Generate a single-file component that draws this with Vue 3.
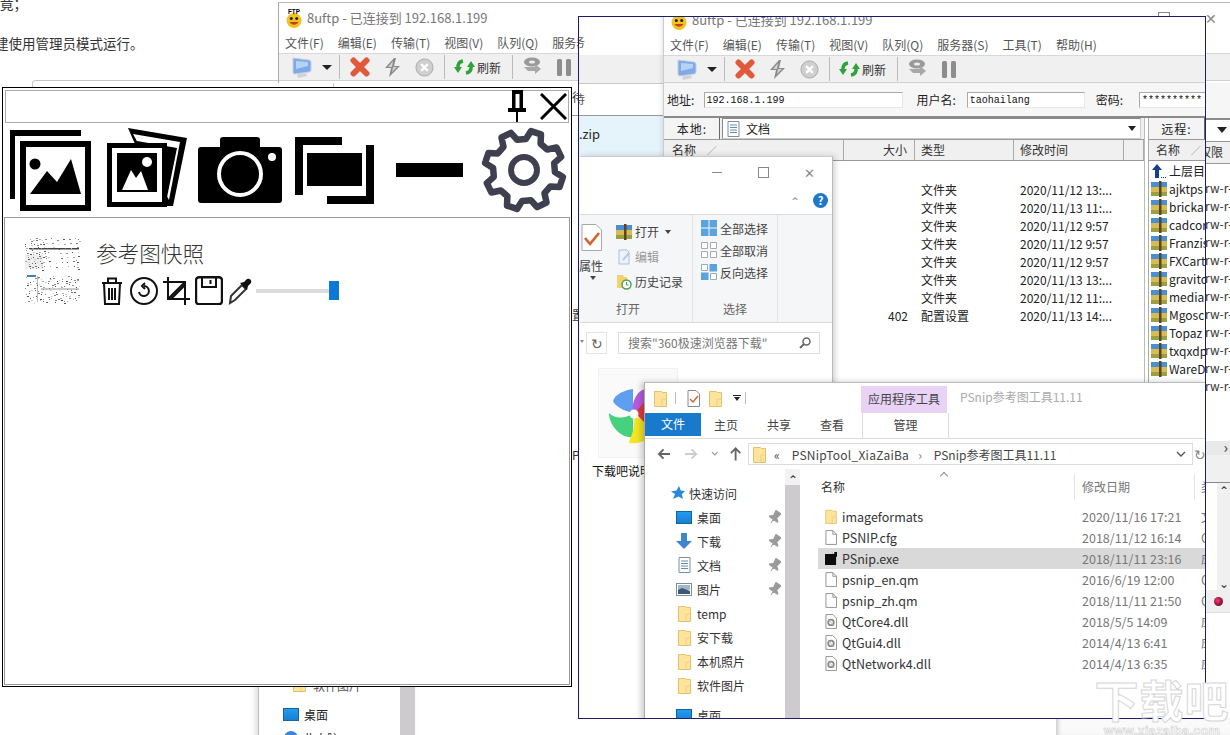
<script setup>
const menu = ['文件(F)', '编辑(E)', '传输(T)', '视图(V)', '队列(Q)', '服务器(S)', '工具(T)', '帮助(H)']

const localRows = [
  { size: '', type: '文件夹', date: '2020/11/12 13:...' },
  { size: '', type: '文件夹', date: '2020/11/13 11:...' },
  { size: '', type: '文件夹', date: '2020/11/12 9:57' },
  { size: '', type: '文件夹', date: '2020/11/12 9:57' },
  { size: '', type: '文件夹', date: '2020/11/12 9:57' },
  { size: '', type: '文件夹', date: '2020/11/13 13:...' },
  { size: '', type: '文件夹', date: '2020/11/12 11:...' },
  { size: '402', type: '配置设置', date: '2020/11/13 14:...' }
]

const remoteRows = ['ajktps', 'bricka', 'cadcor', 'Franzis', 'FXCart', 'gravito', 'media', 'Mgosc', 'Topaz', 'txqxdp', 'WareD']
const permRows = Array.from({ length: 12 }, () => 'rw-r-')

const navPlaces = [
  { icon: 'desk', text: '桌面', pin: true },
  { icon: 'down', text: '下载', pin: true },
  { icon: 'text', text: '文档', pin: true },
  { icon: 'pic', text: '图片', pin: true },
  { icon: 'folder', text: 'temp' },
  { icon: 'folder', text: '安下载' },
  { icon: 'folder', text: '本机照片' },
  { icon: 'folder', text: '软件图片' }
]

const files = [
  { icon: 'folder', name: 'imageformats', date: '2020/11/16 17:21', kind: '文件夹' },
  { icon: 'page', name: 'PSNIP.cfg', date: '2018/11/12 16:14', kind: 'CFG' },
  { icon: 'exe', name: 'PSnip.exe', date: '2018/11/11 23:16', kind: '应用', on: true },
  { icon: 'page', name: 'psnip_en.qm', date: '2016/6/19 12:00', kind: 'QM' },
  { icon: 'page', name: 'psnip_zh.qm', date: '2018/11/11 21:50', kind: 'QM' },
  { icon: 'dll', name: 'QtCore4.dll', date: '2018/5/5 14:09', kind: '应用' },
  { icon: 'dll', name: 'QtGui4.dll', date: '2014/4/13 6:41', kind: '应用' },
  { icon: 'dll', name: 'QtNetwork4.dll', date: '2014/4/13 6:35', kind: '应用' }
]

// gear outline for the settings button
function gearPath(cx, cy, rOut, rIn, teeth) {
  const step = (Math.PI * 2) / teeth
  const at = (r, a) => (cx + r * Math.cos(a)).toFixed(1) + ' ' + (cy + r * Math.sin(a)).toFixed(1)
  let d = ''
  for (let i = 0; i < teeth; i++) {
    const a = i * step + step / 2 - 0.08
    d += (i ? 'L' : 'M') + at(rIn, a - step * 0.32)
    d += 'L' + at(rOut, a - step * 0.17)
    d += 'L' + at(rOut, a + step * 0.17)
    d += 'L' + at(rIn, a + step * 0.32)
  }
  return d + 'Z'
}
const gear = gearPath(43, 43, 39.5, 31, 8)

// speckle of the tiny snapshot preview
let seed = 7
const rnd = () => {
  seed = (seed * 137 + 91) % 2048
  return seed / 2048
}
const shades = ['#555', '#888', '#aaa', '#ccc', '#777']
const dots = []
for (let i = 0; i < 230; i++) {
  const lower = i % 2 === 1
  dots.push({
    x: Math.round(rnd() * 54),
    y: lower ? 38 + Math.round(rnd() * 27) : Math.round(rnd() * 32),
    w: 1 + Math.round(rnd()),
    c: shades[Math.floor(rnd() * shades.length)]
  })
}
</script>

<template>
  <div class="desk">
    <svg class="defs" width="0" height="0">
      <defs>
        <symbol id="s-ftp" viewBox="0 0 18 20">
          <circle cx="9" cy="12.5" r="7.5" fill="#f4c21f" />
          <circle cx="6.3" cy="10.5" r="1.5" fill="#222" />
          <circle cx="11.7" cy="10.5" r="1.5" fill="#222" />
          <path d="M4.5 14c2 3.5 7 3.5 9 0z" fill="#c9401f" />
          <text x="9" y="5.5" font-size="6.4" font-weight="700" text-anchor="middle" font-family="Liberation Sans, sans-serif">FTP</text>
        </symbol>
        <symbol id="s-monitor" viewBox="0 0 20 21">
          <path d="M1 1 17 3q2 .3 2 2v8q0 2-2 2L3 17q-2 .2-2-2z" fill="#7fa9e8" stroke="#c8d0dc" />
          <path d="M4 4 16 5v4L4 12z" fill="#b4d3f7" />
          <path d="M5 17.500 14 16l1 3-9 2z" fill="#cfd3d8" />
        </symbol>
        <symbol id="s-x" viewBox="0 0 20 20">
          <path d="M3.500 3.500 16.500 16.500M16.500 3.500 3.500 16.500" stroke="#e2583a" stroke-width="6" stroke-linecap="round" />
        </symbol>
        <symbol id="s-bolt" viewBox="0 0 15 19">
          <path d="M9 0 0 10h6L4 19l11-11H9l2-8z" fill="#8a8a8a" />
          <path d="M8 3 3 9h5L7 14l5-5H7z" fill="#d0d0d0" />
        </symbol>
        <symbol id="s-stop" viewBox="0 0 20 20">
          <circle cx="10" cy="10" r="9" fill="#cfcfcf" stroke="#a8a8a8" />
          <path d="M6.500 6.500l7 7M13.500 6.500l-7 7" stroke="#fff" stroke-width="2.600" />
        </symbol>
        <symbol id="s-sync" viewBox="0 0 21 16">
          <path d="M9 2Q3 3 4 10" stroke="#2fa239" stroke-width="3.500" fill="none" />
          <path d="M0 8h8l-4 6z" fill="#2fa239" />
          <path d="M12 14q6-1 5-8" stroke="#2fa239" stroke-width="3.500" fill="none" />
          <path d="M13 8h8l-4-6z" fill="#2fa239" />
        </symbol>
        <symbol id="s-disk" viewBox="0 0 18 20">
          <ellipse cx="9" cy="5" rx="8" ry="4.500" fill="#9a9a9a" />
          <ellipse cx="9" cy="5" rx="3" ry="1.500" fill="#eee" />
          <path d="M1 10h11V7l6 5-6 5v-3H5z" fill="#a8a8a8" />
        </symbol>
        <symbol id="s-pause" viewBox="0 0 14 17">
          <rect x="0" y="0" width="5" height="17" rx="1.500" fill="#8d8d8d" />
          <rect x="9" y="0" width="5" height="17" rx="1.500" fill="#8d8d8d" />
        </symbol>
        <symbol id="s-rar" viewBox="0 0 16 16">
          <rect y="1" width="16" height="5" fill="#4a8fd0" />
          <rect y="6" width="16" height="5" fill="#d9bb55" />
          <rect y="11" width="16" height="4" fill="#9aa040" />
          <rect x="8" y="0" width="2.500" height="16" fill="#5b4523" />
        </symbol>
        <symbol id="s-folder" viewBox="0 0 13 17">
          <path d="M.5 1.500h7l1 1h4v14H.5z" fill="#fde39b" stroke="#e3c26e" />
          <path d="M8 16V9h4.500" fill="none" stroke="#efd084" />
        </symbol>
        <symbol id="s-page" viewBox="0 0 13 16">
          <path d="M1 .500h7.500L12.500 4.500V15.500H1z" fill="#fff" stroke="#8d8d8d" />
          <path d="M8.500.500V4.500h4" fill="none" stroke="#8d8d8d" />
        </symbol>
        <symbol id="s-dll" viewBox="0 0 13 16">
          <path d="M1 .500h7.500L12.500 4.500V15.500H1z" fill="#fff" stroke="#8d8d8d" />
          <circle cx="6.500" cy="9" r="3" fill="none" stroke="#8a8a8a" stroke-width="2" />
          <path d="M3 5l7 8" stroke="#b5b5b5" />
        </symbol>
        <symbol id="s-text" viewBox="0 0 13 16">
          <path d="M1 .500h11v15H1z" fill="#fff" stroke="#7f8d9a" />
          <path d="M3 4h7M3 6.500h7M3 9h7M3 11.500h7" stroke="#5e8fb2" />
        </symbol>
        <symbol id="s-pin" viewBox="0 0 12 14">
          <path d="M3 1 9 1 8 7 11 9 11 10 1 10 1 9 4 7z M6 10 6 14" fill="#9a9a9a" stroke="#9a9a9a" transform="rotate(35 6 7)" />
        </symbol>
      </defs>
    </svg>

    <div class="bg-text first">竟；</div>
    <div class="bg-text second">建使用管理员模式运行。</div>
    <div class="bg-card"></div>

    <!-- real ftp client behind everything -->
    <div class="ftp real">
      <div class="ftp-title">
        <svg class="ftp-logo"><use href="#s-ftp" /></svg>
        <span>8uftp - 已连接到 192.168.1.199</span>
        <i class="box-btn"></i>
        <span class="x-btn">✕</span>
      </div>
      <div class="ftp-menu"><span v-for="m in menu" :key="m">{{ m }}</span></div>
      <div class="ftp-tools">
        <svg class="t-mon"><use href="#s-monitor" /></svg>
        <i class="t-arrow"></i>
        <i class="t-sep s1"></i>
        <svg class="t-x"><use href="#s-x" /></svg>
        <svg class="t-bolt"><use href="#s-bolt" /></svg>
        <svg class="t-stop"><use href="#s-stop" /></svg>
        <i class="t-sep s2"></i>
        <svg class="t-sync"><use href="#s-sync" /></svg>
        <span class="t-label">刷新</span>
        <i class="t-sep s3"></i>
        <svg class="t-disk"><use href="#s-disk" /></svg>
        <svg class="t-pause"><use href="#s-pause" /></svg>
      </div>
    </div>

    <div class="under">
      <div class="u-a">待</div>
      <div class="u-b"></div>
      <div class="u-c">置</div>
      <div class="u-d">P</div>
    </div>

    <div class="edge">
      <div class="e-addr"></div>
      <div class="e-combo"><i class="e-drop"></i></div>
      <div class="e-head">权限</div>
      <div class="e-list">
        <div v-for="(p, i) in permRows" :key="i" class="e-row">{{ p }}</div>
      </div>
      <div class="e-hscroll"><span>›</span></div>
      <div class="e-grey"></div>
      <div class="e-view">
        <div class="e-vbar"><span>⌃</span><span>⌄</span></div>
      </div>
      <div class="e-status"><i class="e-dot"></i></div>
    </div>

    <div class="low-nav">
      <div class="low-top">
        <svg class="low-folder"><use href="#s-folder" /></svg>
        <span>软件图片</span>
      </div>
      <div class="low-row"><i class="ic-desk"></i><span>桌面</span></div>
      <div class="low-row"><i class="low-ball"></i><span>此电脑</span></div>
    </div>
    <div class="low-shade"></div>

    <!-- pinned snapshot with the navy frame -->
    <div class="frame">
      <div class="cap-left">
        <div class="cap-white"><span>务</span></div>
        <div class="cap-grey"></div>
        <div class="cap-white2"><span>待</span></div>
        <div class="cap-sel"><span>.zip</span></div>
      </div>

      <div class="ftp copy">
        <div class="ftp-title">
          <svg class="ftp-logo"><use href="#s-ftp" /></svg>
          <span>8uftp - 已连接到 192.168.1.199</span>
        </div>
        <div class="ftp-menu"><span v-for="m in menu" :key="m">{{ m }}</span></div>
        <div class="ftp-tools">
          <svg class="t-mon"><use href="#s-monitor" /></svg>
          <i class="t-arrow"></i>
          <i class="t-sep s1"></i>
          <svg class="t-x"><use href="#s-x" /></svg>
          <svg class="t-bolt"><use href="#s-bolt" /></svg>
          <svg class="t-stop"><use href="#s-stop" /></svg>
          <i class="t-sep s2"></i>
          <svg class="t-sync"><use href="#s-sync" /></svg>
          <span class="t-label">刷新</span>
          <i class="t-sep s3"></i>
          <svg class="t-disk"><use href="#s-disk" /></svg>
          <svg class="t-pause"><use href="#s-pause" /></svg>
        </div>
        <div class="addr">
          <span class="a-l1">地址:</span>
          <span class="a-in in1">192.168.1.199</span>
          <span class="a-l2">用户名:</span>
          <span class="a-in in2">taohailang</span>
          <span class="a-l3">密码:</span>
          <span class="a-in in3">**********</span>
        </div>
        <div class="panes">
          <div class="local">
            <div class="p-top">
              <span class="p-tab">本地:</span>
              <div class="p-combo">
                <svg class="p-doc"><use href="#s-text" /></svg>
                <span>文档</span>
                <i class="p-drop"></i>
              </div>
            </div>
            <div class="l-head">
              <span class="c-name">名称 <em>∕</em></span>
              <span class="c-size">大小</span>
              <span class="c-type">类型</span>
              <span class="c-date">修改时间</span>
              <span class="c-end"></span>
            </div>
            <div class="l-body">
              <div v-for="(r, i) in localRows" :key="i" class="l-row">
                <span class="c-name"></span>
                <span class="c-size">{{ r.size }}</span>
                <span class="c-type">{{ r.type }}</span>
                <span class="c-date">{{ r.date }}</span>
              </div>
            </div>
          </div>
          <div class="remote">
            <div class="p-top"><span class="p-tab rt">远程:</span></div>
            <div class="l-head"><span class="r-name">名称 <em>∕</em></span></div>
            <div class="r-body">
              <div class="r-row">
                <svg class="r-up" viewBox="0 0 16 16">
                  <path d="M6 1 11 7H8v8H4V7H1z" fill="#15408f" />
                  <path d="M10 14h1v1h-1zM12 14h1v1h-1zM14 14h1v1h-1z" fill="#333" />
                </svg>
                <span>上层目录</span>
              </div>
              <div v-for="r in remoteRows" :key="r" class="r-row">
                <svg class="r-ic"><use href="#s-rar" /></svg>
                <span>{{ r }}</span>
              </div>
            </div>
          </div>
        </div>
      </div>

      <!-- explorer: 360 downloads -->
      <div class="ex1">
        <div class="ex1-title">
          <i class="w-min"></i><i class="w-max"></i><span class="w-x">✕</span>
        </div>
        <div class="ex1-tabs">
          <span class="ex1-chev">⌃</span>
          <span class="ex1-help">?</span>
        </div>
        <div class="ribbon">
          <div class="rb-group g1">
            <div class="rb-cols">
              <div class="rb-prop">
                <svg class="rb-propic" viewBox="0 0 21 27">
                  <path d="M1 .500H15L20.500 6V26.500H1z" fill="#fff" stroke="#a8a8a8" />
                  <path d="M4 14l5 6 9-11" stroke="#d1622b" stroke-width="2.600" fill="none" />
                </svg>
                <span class="rb-prop-t">属性</span>
                <i class="rb-tri"></i>
              </div>
              <div class="rb-open">
                <div class="rb-line"><svg class="rb-ic"><use href="#s-rar" /></svg><span>打开</span><i class="rb-tri side"></i></div>
                <div class="rb-line dim">
                  <svg class="rb-ic" viewBox="0 0 16 16"><path d="M3 1h8l2 2v12H3z" fill="#eef3fa" stroke="#a9bfdc" /><path d="M7 11 13 4" stroke="#b9c9e0" stroke-width="2" /></svg>
                  <span>编辑</span>
                </div>
                <div class="rb-line">
                  <svg class="rb-ic" viewBox="0 0 16 16">
                    <path d="M1 1h6l1 2h3v11H1z" fill="#f3d26c" />
                    <circle cx="10.500" cy="10.500" r="4.500" fill="#fff" stroke="#4ca05a" stroke-width="1.500" />
                    <path d="M10.500 8v3h2" stroke="#4ca05a" fill="none" />
                  </svg>
                  <span>历史记录</span>
                </div>
              </div>
            </div>
            <div class="rb-label">打开</div>
          </div>
          <div class="rb-group g2">
            <div class="rb-sel">
              <div class="rb-line">
                <svg class="rb-ic" viewBox="0 0 16 16"><path d="M0 0h7.500v7.500H0zM8.500 0H16v7.500H8.500zM0 8.500h7.500V16H0zM8.500 8.500H16V16H8.500z" fill="#5ba3de" /></svg>
                <span>全部选择</span>
              </div>
              <div class="rb-line">
                <svg class="rb-ic" viewBox="0 0 16 16"><path d="M.500.500h6v6h-6zM9.500.500h6v6h-6zM.500 9.500h6v6h-6zM9.500 9.500h6v6h-6z" fill="#fff" stroke="#aaa" /></svg>
                <span>全部取消</span>
              </div>
              <div class="rb-line">
                <svg class="rb-ic" viewBox="0 0 16 16"><path d="M.500.500h6v6h-6zM9.500 9.500h6v6h-6z" fill="#fff" stroke="#9ab" /><path d="M8.500 0H16v7.500H8.500zM0 8.500h7.500V16H0z" fill="#5ba3de" /></svg>
                <span>反向选择</span>
              </div>
            </div>
            <div class="rb-label">选择</div>
          </div>
        </div>
        <div class="ex1-search">
          <i class="s-tri"></i>
          <span class="s-refresh">↻</span>
          <div class="s-box">
            <span>搜索"360极速浏览器下载"</span>
            <svg class="s-mag" viewBox="0 0 12 12"><circle cx="7.500" cy="4.500" r="3.500" fill="none" stroke="#666" stroke-width="1.500" /><path d="M5 7 1 11" stroke="#666" stroke-width="2" /></svg>
          </div>
        </div>
        <div class="ex1-body">
          <div class="bigfile">
            <svg class="wheel" viewBox="0 0 50 60">
              <path d="M32 26 C22 24 13 18 12 14 C14 7 24 3 32 2z" fill="#5f9ff2" />
              <path d="M32 26 C30 16 36 2 46 2 C54 4 60 14 60 22z" fill="#b65be0" />
              <path d="M32 26 C22 34 12 30 8 26 C8 38 20 52 32 50z" fill="#45d17e" />
              <path d="M32 28 C36 38 30 48 28 56 C40 58 54 50 56 40z" fill="#f4e521" />
              <path d="M34 26 44 14 60 30 46 38z" fill="#e23b3b" />
              <circle cx="33" cy="27" r="4.500" fill="#fff" />
            </svg>
          </div>
          <div class="bigname">下载吧说明</div>
        </div>
      </div>

      <!-- explorer: PSnip folder -->
      <div class="ex2">
        <div class="ex2-title">
          <svg class="q-f1"><use href="#s-folder" /></svg>
          <i class="q-sep a"></i>
          <svg class="q-doc" viewBox="0 0 13 17">
            <path d="M1 .500h8l3.500 3.500v12.500H1z" fill="#fff" stroke="#888" />
            <path d="M3 9l3 3 5-6" stroke="#d1622b" stroke-width="1.400" fill="none" />
          </svg>
          <svg class="q-f2"><use href="#s-folder" /></svg>
          <i class="q-arrow"></i>
          <i class="q-sep b"></i>
          <span class="tool-tab">应用程序工具</span>
          <span class="ex2-name">PSnip参考图工具11.11</span>
        </div>
        <div class="ex2-tabs">
          <span class="tb-file">文件</span>
          <span class="tb t1">主页</span>
          <span class="tb t2">共享</span>
          <span class="tb t3">查看</span>
          <span class="tb-manage">管理</span>
        </div>
        <div class="ex2-nav">
          <svg class="n-back" viewBox="0 0 14 12"><path d="M7 1 2 6l5 5M2 6h12" stroke="#666" stroke-width="2" fill="none" /></svg>
          <svg class="n-fwd" viewBox="0 0 14 12"><path d="M7 1l5 5-5 5M12 6H0" stroke="#ccc" stroke-width="2" fill="none" /></svg>
          <svg class="n-dn" viewBox="0 0 8 6"><path d="M1 1l3 3 3-3" stroke="#999" stroke-width="1.300" fill="none" /></svg>
          <svg class="n-up" viewBox="0 0 12 14"><path d="M1 6l5-5 5 5M6 1v13" stroke="#666" stroke-width="2" fill="none" /></svg>
          <div class="n-addr">
            <svg class="n-f"><use href="#s-folder" /></svg>
            <span class="n-q">«</span>
            <span class="n-a">PSNipTool_XiaZaiBa</span>
            <span class="n-gt">›</span>
            <span class="n-b">PSnip参考图工具11.11</span>
            <svg class="n-chev" viewBox="0 0 10 6"><path d="M1 1l4 4 4-4" stroke="#555" stroke-width="1.400" fill="none" /></svg>
          </div>
          <span class="n-refresh">↻</span>
        </div>
        <div class="ex2-main">
          <div class="navp">
            <div class="nv-row nv-head">
              <svg class="nv-star" viewBox="0 0 14 14"><path d="M8 0 9.800 4.500 14 5 10.800 8.200 12 13 7.500 10.500 2 13 4 8 0 5.500 5.500 4.500z" fill="#2d87d8" /></svg>
              <span>快速访问</span>
            </div>
            <div v-for="n in navPlaces" :key="n.text" class="nv-row">
              <span class="nv-ic">
                <i v-if="n.icon === 'desk'" class="ic-desk"></i>
                <svg v-else-if="n.icon === 'down'" class="nv-dl" viewBox="0 0 16 16"><path d="M5 0h6v8h5l-8 8-8-8h5z" fill="#3f86d2" /></svg>
                <svg v-else-if="n.icon === 'text'" class="nv-txt"><use href="#s-text" /></svg>
                <svg v-else-if="n.icon === 'pic'" class="nv-pic" viewBox="0 0 16 13"><rect x=".5" y=".5" width="15" height="12" fill="#fff" stroke="#7f8d9a" /><path d="M2 2h12v5H2z" fill="#9fb7cf" /><path d="M2 7l4-2 8 3v3H2z" fill="#3c5a70" /></svg>
                <svg v-else class="nv-fold"><use href="#s-folder" /></svg>
              </span>
              <span class="nv-t">{{ n.text }}</span>
              <svg v-if="n.pin" class="nv-pin"><use href="#s-pin" /></svg>
            </div>
            <div class="nv-row nv-last">
              <span class="nv-ic"><i class="ic-desk"></i></span>
              <span class="nv-t">桌面</span>
            </div>
          </div>
          <div class="navs"><span>⌃</span></div>
          <div class="list">
            <i class="sort-up"></i>
            <div class="f-head">
              <span class="f-name hd">名称</span>
              <span class="f-date hd">修改日期</span>
              <span class="f-kind hd">类型</span>
            </div>
            <div class="f-rows">
              <div v-for="f in files" :key="f.name" class="f-row" :class="{ on: f.on }">
                <span class="f-name">
                  <svg v-if="f.icon === 'folder'" class="f-ic"><use href="#s-folder" /></svg>
                  <svg v-else-if="f.icon === 'page'" class="f-ic"><use href="#s-page" /></svg>
                  <svg v-else-if="f.icon === 'dll'" class="f-ic"><use href="#s-dll" /></svg>
                  <svg v-else class="f-ic" viewBox="0 0 13 14"><path d="M0 2h8V0h5v5h-1v9H0z" fill="#0c0c0c" /><path d="M8 2h2V0H8z" fill="#fff" /></svg>
                  <span>{{ f.name }}</span>
                </span>
                <span class="f-date">{{ f.date }}</span>
                <span class="f-kind">{{ f.kind }}</span>
              </div>
            </div>
          </div>
        </div>
      </div>
    </div>

    <!-- the PSnip tool window -->
    <div class="psnip">
      <div class="ps-head">
        <svg class="ps-pin" viewBox="0 0 18 32">
          <path d="M4 0h11v18h3v4H10v10H8V22H0v-4h4zM7.500 4v14h4V4z" fill="#000" fill-rule="evenodd" />
        </svg>
        <svg class="ps-close" viewBox="0 0 27 27"><path d="M1 1 26 26M26 1 1 26" stroke="#000" stroke-width="3" /></svg>
      </div>
      <div class="ps-icons">
        <svg class="i1" viewBox="0 0 81 81">
          <path d="M0 0h71v6H5v63H0z" />
          <path d="M10 11h71v70H10zM16 17v58h59V17z" fill-rule="evenodd" />
          <circle cx="25" cy="34" r="5.500" />
          <path d="M20 64 37 41 47 52 61 29 71 64z" />
        </svg>
        <svg class="i2" viewBox="0 0 80 80">
          <path d="M21 0 80 10 66 78 55 78z" />
          <path d="M26 6 73 14 62 72z" fill="#fff" />
          <path d="M30 13 70 20 58 79 40 79z" />
          <path d="M0 15h60v64H0z" />
          <path d="M5 20h50v54H5z" fill="#fff" />
          <path d="M10 25h40v39H10z" />
          <circle cx="40" cy="34" r="5" fill="#fff" />
          <path d="M15 62 24 42 29 50 34 43 41 62z" fill="#fff" />
        </svg>
        <svg class="i3" viewBox="0 0 84 66">
          <rect x="22" y="0" width="40" height="14" rx="3" />
          <rect x="0" y="10" width="84" height="56" rx="3" />
          <circle cx="42" cy="37" r="21" fill="none" stroke="#fff" stroke-width="4" />
          <circle cx="74" cy="20" r="4" fill="#fff" />
        </svg>
        <svg class="i4" viewBox="0 0 79 67">
          <path d="M0 0h47v8H8v50H0zM12 16h55v33H12zM71 8h8v59H32v-8h39z" />
        </svg>
        <i class="i5"></i>
        <svg class="i6" viewBox="0 0 86 86">
          <path :d="gear" fill="none" stroke="#3e404f" stroke-width="6.500" stroke-linejoin="round" />
          <circle cx="43" cy="43" r="13" fill="none" stroke="#3e404f" stroke-width="6" />
        </svg>
      </div>
      <div class="ps-panel">
        <div class="snap">
          <svg class="thumb" viewBox="0 0 57 66">
            <rect x="4" y="10" width="50" height="1.500" fill="#444" />
            <rect x="0" y="17" width="18" height="14" fill="#eee" />
            <rect x="2" y="37" width="9" height="2" fill="#3b7fc4" />
            <rect x="16" y="50" width="38" height="2" fill="#ccc" />
            <rect x="12" y="38" width="1" height="26" fill="#bbb" />
            <rect v-for="(d, i) in dots" :key="i" :x="d.x" :y="d.y" :width="d.w" height="1" :fill="d.c" />
          </svg>
          <div class="snap-side">
            <div class="snap-title">参考图快照</div>
            <div class="snap-tools">
              <svg class="m1" viewBox="0 0 22 28"><path d="M1 6h20M7 6V1.500h8V6M3 6l1 21h14l1-21M8 11v12M11 11v12M14 11v12" fill="none" stroke="#111" stroke-width="2" /></svg>
              <svg class="m2" viewBox="0 0 28 28"><circle cx="14" cy="14" r="13" fill="none" stroke="#111" stroke-width="2" /><path d="M14 9a5 5 0 1 1-5 6" fill="none" stroke="#111" stroke-width="2" /><path d="M15 6 12 9l3 3" fill="none" stroke="#111" stroke-width="2" /></svg>
              <svg class="m3" viewBox="0 0 27 28"><path d="M5 0v22h22M0 5h22v23M5 22 22 5M8 22 22 8" fill="none" stroke="#111" stroke-width="2" /></svg>
              <svg class="m4" viewBox="0 0 28 29"><path d="M4 1.200h20a3 3 0 0 1 3 3v21a3 3 0 0 1-3 3H4a3 3 0 0 1-3-3v-21a3 3 0 0 1 3-3z" fill="none" stroke="#111" stroke-width="2.400" /><path d="M7 1v10h14V1M15.500 4v4" fill="none" stroke="#111" stroke-width="2" /></svg>
              <svg class="m5" viewBox="0 0 24 28"><path d="M2 26l1-7L14 8l4 4L7 23z" fill="none" stroke="#333" stroke-width="2" /><path d="M12 6l7 7 1-4 3-3a3 3 0 0 0-4-4l-3 3z" fill="#111" /></svg>
              <div class="slider"><i class="sl-thumb"></i></div>
            </div>
          </div>
        </div>
      </div>
    </div>

    <div class="mark">
      <div class="mark-big">下载吧</div>
      <div class="mark-url">www.xiazaiba.com</div>
    </div>
  </div>
</template>

<style scoped>
.desk {
  position: relative;
  width: 1230px;
  height: 735px;
  overflow: hidden;
  background: #fff;
  font-family: "Noto Sans CJK SC", "Noto Sans", sans-serif;
  font-size: 12px;
  color: #333;
}
.desk i { display: block; font-style: normal; }
.defs { position: absolute; }

.bg-text { position: absolute; font-size: 13.5px; line-height: 18px; color: #333; }
.first { left: 0; top: -6px; }
.second { left: -5px; top: 34px; }
.bg-card {
  position: absolute;
  left: 32px;
  top: 80px;
  width: 300px;
  height: 20px;
  border: 1px solid #c8c8c8;
  border-radius: 3px;
}

/* ftp client */
.ftp { position: absolute; background: #fff; }
.real { left: 278px; top: 2px; width: 952px; height: 81px; border-left: 1px solid #aaa; border-top: 1px solid #bbb; box-sizing: border-box; }
.copy { left: 84px; top: -12px; width: 545px; height: 400px; border-left: 1px solid #ccc; box-shadow: -2px 0 4px rgba(0,0,0,.08); }
.ftp-title { height: 29px; display: flex; align-items: center; padding-left: 6px; font-size: 13px; color: #777; }
.ftp-logo { width: 18px; height: 20px; margin-right: 4px; flex: none; }
.box-btn { width: 10px; height: 10px; border: 1px solid #888; margin-left: auto; }
.x-btn { margin: 0 11px 0 35px; font-size: 14px; color: #888; width: 14px; }
.ftp-menu { height: 21px; display: flex; gap: 14px; padding-left: 6px; line-height: 21px; color: #555; white-space: nowrap; }
.ftp-tools {
  height: 28px;
  display: flex;
  align-items: center;
  background: #f0f0f0;
  border-top: 1px solid #d8d8d8;
  border-bottom: 1px solid #d0d0d0;
  box-sizing: border-box;
}
.t-mon { width: 20px; height: 21px; margin-left: 13px; }
.t-arrow { width: 0; height: 0; border: 5px solid transparent; border-top: 5px solid #222; border-bottom: 0; margin-left: 10px; }
.t-sep { width: 1px; height: 24px; background: #bbb; }
.s1 { margin-left: 7px; }
.t-x { width: 20px; height: 20px; margin-left: 10px; }
.t-bolt { width: 15px; height: 19px; margin-left: 15px; }
.t-stop { width: 19px; height: 19px; margin-left: 15px; }
.s2 { margin-left: 10px; }
.t-sync { width: 21px; height: 16px; margin-left: 9px; }
.t-label { margin-left: 2px; width: 24px; color: #333; }
.s3 { margin-left: 11px; }
.t-disk { width: 18px; height: 20px; margin-left: 10px; }
.t-pause { width: 14px; height: 17px; margin-left: 16px; }

.addr {
  height: 33px;
  display: flex;
  align-items: center;
  background: #f6f6f6;
  white-space: nowrap;
  color: #222;
}
.a-l1 { margin-left: 3px; width: 38px; }
.a-in {
  height: 16px;
  line-height: 15px;
  font-family: "Liberation Mono", monospace;
  font-size: 10px;
  color: #111;
  background: #fff;
  border: 1px solid #aaa;
  border-right-color: #e6e6e6;
  border-bottom-color: #e6e6e6;
  box-sizing: border-box;
  padding-left: 2px;
  flex: none;
}
.in1 { width: 199px; }
.a-l2 { margin-left: 14px; width: 52px; }
.in2 { width: 118px; }
.a-l3 { margin-left: 11px; width: 45px; }
.in3 { width: 70px; }

.panes { display: flex; border-top: 2px solid #8a8a8a; background: #fff; }
.local { width: 480px; flex: none; border-right: 1px solid #bbb; }
.remote { width: 70px; margin-left: 3px; border-left: 1px solid #aaa; flex: none; }
.p-top { height: 22px; display: flex; background: #f0f0f0; box-sizing: border-box; border-bottom: 1px solid #999; }
.p-tab { width: 54px; margin-left: 1px; text-align: center; line-height: 21px; letter-spacing: 1px; background: #f4f4f4; border-right: 1px solid #666; flex: none; color: #222; }
.rt { width: 55px; margin-left: 0; }
.p-combo { flex: 1; margin: 0 3px 0 2px; display: flex; align-items: center; background: #fff; border: 1px solid #ccc; border-top-color: #888; border-left-color: #888; color: #222; }
.p-doc { width: 13px; height: 16px; margin: 0 6px 0 4px; }
.p-drop { width: 0; height: 0; border: 4px solid transparent; border-top: 5px solid #222; border-bottom: 0; margin: 0 4px 0 auto; }
.l-head { height: 21px; display: flex; line-height: 20px; background: #f0f0f0; border-bottom: 1px solid #999; box-sizing: border-box; color: #333; white-space: nowrap; }
.l-head span { border-right: 1px solid #aaa; box-sizing: border-box; }
.l-head em { margin-left: 8px; font-size: 10px; color: #888; font-style: normal; }
.c-name { width: 180px; padding-left: 8px; flex: none; box-sizing: border-box; }
.c-size { width: 71px; text-align: right; padding-right: 7px; flex: none; box-sizing: border-box; }
.c-type { width: 99px; padding-left: 6px; flex: none; box-sizing: border-box; }
.c-date { width: 110px; padding-left: 6px; flex: none; box-sizing: border-box; }
.c-end { flex: 1; }
.l-body { padding-top: 20px; height: 240px; }
.l-row { display: flex; height: 18px; line-height: 18px; color: #222; white-space: nowrap; }
.r-name { width: 100%; padding-left: 7px; border-right: 0 !important; }
.r-body { padding-top: 1px; width: 58px; overflow: hidden; }
.r-row { height: 18px; line-height: 18px; display: flex; align-items: center; color: #222; white-space: nowrap; padding-left: 2px; }
.r-ic, .r-up { width: 16px; height: 16px; margin-right: 2px; flex: none; }

/* left part of the snapshot */
.frame {
  position: absolute;
  left: 578px;
  top: 16px;
  width: 628px;
  height: 703px;
  border: 1px solid #1c1c6e;
  box-sizing: border-box;
  overflow: hidden;
  background: #fff;
}
.cap-left { position: absolute; left: 0; top: 0; width: 84px; }
.cap-white { height: 38px; font-size: 12px; line-height: 50px; overflow: hidden; margin-left: -6px; color: #555; }
.cap-grey { height: 28px; background: #f0f0f0; border-bottom: 1px solid #c8c8c8; }
.cap-white2 { height: 31px; line-height: 30px; margin-left: -6px; color: #555; }
.cap-sel { height: 41px; line-height: 36px; background: #e5f3fb; border-top: 1px solid #999; color: #222; font-size: 13px; font-family: "Noto Sans", sans-serif; white-space: nowrap; }

/* explorer one */
.ex1 {
  position: absolute;
  left: 1px;
  top: 139px;
  width: 252px;
  height: 600px;
  background: #fff;
  border-right: 1px solid #bbb;
  border-top: 1px solid #ccc;
  box-shadow: 2px 0 6px rgba(0,0,0,.18);
}
.ex1-title { height: 30px; display: flex; align-items: center; color: #777; }
.w-min { width: 10px; height: 1px; background: #888; margin-left: 132px; }
.w-max { width: 9px; height: 9px; border: 1px solid #888; margin-left: 36px; }
.w-x { font-size: 13px; color: #888; margin-left: 35px; }
.ex1-tabs { height: 27px; display: flex; align-items: center; justify-content: flex-end; padding-right: 4px; }
.ex1-chev { color: #999; font-size: 12px; margin-right: 13px; line-height: 10px; }
.ex1-help { width: 15px; height: 15px; border-radius: 50%; background: #1f78c9; color: #fff; font-size: 11px; font-weight: 700; text-align: center; line-height: 15px; }
.ribbon { height: 109px; display: flex; background: #f5f6f7; border-top: 1px solid #dadbdc; border-bottom: 1px solid #dadbdc; box-sizing: border-box; color: #444; }
.rb-group { display: flex; flex-direction: column; border-right: 1px solid #e2e3e4; box-sizing: border-box; }
.g1 { width: 113px; }
.g2 { width: 85px; }
.rb-cols { flex: 1; display: flex; }
.rb-prop { width: 36px; padding-top: 9px; flex: none; position: relative; }
.rb-propic { width: 21px; height: 27px; display: block; margin-left: 1px; }
.rb-prop-t { display: block; margin: 6px 0 0 -1px; line-height: 18px; }
.rb-tri { width: 0; height: 0; border: 3px solid transparent; border-top: 4px solid #444; border-bottom: 0; margin-left: 10px; margin-top: 1px; }
.rb-tri.side { margin-left: 6px; margin-top: 0; }
.rb-open { padding-top: 4px; }
.rb-line { height: 25px; display: flex; align-items: center; white-space: nowrap; }
.rb-line.dim { color: #999; }
.rb-ic { width: 16px; height: 16px; margin-right: 3px; flex: none; }
.rb-label { height: 22px; line-height: 18px; text-align: center; color: #666; }
.g1 .rb-label { padding-left: 0; text-align: left; margin-left: 36px; }
.rb-sel { flex: 1; padding: 2px 0 0 8px; }
.rb-sel .rb-line { height: 22px; }
.ex1-search { height: 39px; display: flex; align-items: center; background: #fff; }
.s-tri { width: 0; height: 0; border: 2px solid transparent; border-top: 3px solid #888; margin-left: 0; }
.s-refresh { width: 21px; height: 22px; margin-left: 2px; border: 1px solid #e4e4e4; box-sizing: border-box; text-align: center; line-height: 20px; font-size: 14px; color: #666; }
.s-box { width: 202px; height: 22px; margin-left: 11px; display: flex; align-items: center; justify-content: space-between; padding: 0 8px 0 9px; border: 1px solid #dcdcdc; box-sizing: border-box; color: #777; white-space: nowrap; }
.s-mag { width: 12px; height: 12px; }
.ex1-body { padding: 6px 0 0 18px; }
.bigfile { width: 80px; height: 90px; background: #fafafa; border: 1px solid #f2f2f2; box-sizing: border-box; }
.wheel { width: 50px; height: 60px; margin: 18px 0 0 2px; display: block; }
.bigname { margin: 4px 0 0 -6px; color: #111; line-height: 18px; }

/* explorer two */
.ex2 {
  position: absolute;
  left: 65px;
  top: 365px;
  width: 562px;
  height: 340px;
  background: #fff;
  border-left: 1px solid #aaa;
  border-top: 1px solid #bbb;
  box-shadow: -3px 0 6px rgba(0,0,0,.2);
  box-sizing: border-box;
}
.ex2-title { height: 30px; display: flex; align-items: center; white-space: nowrap; }
.q-f1 { width: 13px; height: 17px; margin-left: 9px; }
.q-sep { width: 1px; height: 12px; background: #bbb; }
.q-sep.a { margin-left: 8px; }
.q-doc { width: 13px; height: 17px; margin-left: 11px; }
.q-f2 { width: 13px; height: 17px; margin-left: 9px; }
.q-arrow { width: 8px; height: 5px; margin-left: 11px; border-top: 1px solid #222; position: relative; }
.q-arrow::after { content: ""; display: block; width: 0; height: 0; margin: 1px auto 0; border: 3px solid transparent; border-top: 4px solid #222; border-bottom: 0; }
.q-sep.b { margin-left: 4px; }
.tool-tab { width: 86px; height: 27px; margin-left: 115px; align-self: flex-end; text-align: center; line-height: 25px; background: #e8d2f5; color: #444; }
.ex2-name { margin-left: 13px; color: #aaa; margin-top: -3px; }
.ex2-tabs { height: 26px; display: flex; white-space: nowrap; color: #444; border-bottom: 1px solid #dadbdc; box-sizing: border-box; }
.tb-file { width: 56px; height: 23px; line-height: 22px; background: #1979ca; color: #fff; text-align: center; }
.tb { line-height: 23px; }
.t1 { margin-left: 13px; }
.t2 { margin-left: 29px; }
.t3 { margin-left: 29px; }
.tb-manage { width: 85px; margin-left: 18px; text-align: center; line-height: 23px; border: 1px solid #dadbdc; border-width: 0 1px; }
.ex2-nav { height: 30px; display: flex; align-items: center; white-space: nowrap; }
.n-back { width: 14px; height: 12px; margin-left: 12px; }
.n-fwd { width: 14px; height: 12px; margin-left: 15px; }
.n-dn { width: 8px; height: 6px; margin-left: 13px; }
.n-up { width: 12px; height: 14px; margin-left: 11px; }
.n-addr { width: 445px; height: 22px; margin-left: 7px; display: flex; align-items: center; border: 1px solid #dcdcdc; box-sizing: border-box; color: #444; flex: none; }
.n-f { width: 13px; height: 17px; margin-left: 4px; flex: none; }
.n-q { margin-left: 8px; }
.n-a { margin-left: 12px; letter-spacing: .25px; }
.n-gt { margin-left: 9px; color: #777; }
.n-b { margin-left: 12px; }
.n-chev { width: 10px; height: 6px; margin-left: auto; margin-right: 6px; }
.n-refresh { margin-left: 1px; color: #888; font-size: 14px; }
.ex2-main { display: flex; height: 260px; }
.navp { width: 140px; flex: none; padding-top: 12px; white-space: nowrap; color: #333; }
.nv-row { height: 24px; display: flex; align-items: center; }
.nv-head { padding-left: 26px; }
.nv-star { width: 14px; height: 14px; margin-right: 4px; }
.nv-ic { width: 52px; padding-left: 31px; box-sizing: border-box; flex: none; display: flex; justify-content: flex-start; }
.ic-desk { width: 16px; height: 13px; background: linear-gradient(#1f9cf0, #1a7fd4); border: 1px solid #17659f; box-sizing: border-box; flex: none; }
.nv-dl { width: 16px; height: 16px; }
.nv-txt { width: 13px; height: 16px; margin-left: 2px; }
.nv-pic { width: 16px; height: 13px; }
.nv-fold { width: 13px; height: 17px; margin-left: 2px; }
.nv-pin { width: 12px; height: 14px; margin-left: auto; margin-right: 4px; }
.nv-t { margin-right: 4px; }
.nv-last { margin-top: 6px; }
.navs { width: 15px; flex: none; background: #cdcbce; height: 100%; text-align: center; color: #333; position: relative; }
.navs span { display: block; height: 16px; line-height: 20px; background: #f2f2f2; }
.list { flex: 1; position: relative; padding-top: 5px; overflow: hidden; font-size: 12.5px; }
.sort-up { position: absolute; left: 141px; top: 4px; width: 5px; height: 5px; border: solid #888; border-width: 1px 0 0 1px; transform: rotate(45deg); }
.f-head { height: 26px; display: flex; margin-left: 18px; line-height: 26px; color: #666; font-size: 12px; white-space: nowrap; }
.f-rows { margin-top: 6px; margin-left: 18px; }
.f-row { height: 21px; display: flex; align-items: center; white-space: nowrap; line-height: 21px; }
.f-row.on { background: #d9d9d9; }
.f-name { width: 257px; display: flex; align-items: center; padding-left: 7px; flex: none; box-sizing: border-box; color: #333; }
.f-name.hd { padding-left: 3px; border-right: 1px solid #e4e4e4; height: 26px; }
.f-ic { width: 12px; height: 15px; margin-right: 5px; flex: none; }
.f-date { width: 120px; padding-left: 7px; flex: none; box-sizing: border-box; color: #777; }
.f-date.hd { border-right: 1px solid #e4e4e4; height: 26px; }
.f-kind { padding-left: 6px; color: #777; }

/* ftp leftovers around the frame */
.under { position: absolute; left: 572px; top: 84px; width: 8px; height: 440px; overflow: hidden; color: #333; line-height: 18px; }
.u-a { height: 31px; padding-top: 4px; box-sizing: border-box; }
.u-b { height: 190px; border-top: 1px solid #999; }
.u-c { height: 140px; }
.u-d { height: 30px; }

.edge { position: absolute; left: 1206px; top: 83px; width: 24px; height: 560px; display: flex; flex-direction: column; background: #fff; overflow: hidden; }
.e-addr { height: 35px; background: #f6f6f6; border-bottom: 2px solid #8a8a8a; flex: none; }
.e-combo { height: 21px; background: #fff; display: flex; justify-content: flex-end; border-bottom: 1px solid #999; flex: none; }
.e-drop { width: 0; height: 0; border: 5px solid transparent; border-top: 6px solid #222; border-bottom: 0; margin: 7px 3px 0 0; }
.e-head { height: 21px; line-height: 20px; background: #f0f0f0; border-bottom: 1px solid #999; margin-left: -7px; white-space: nowrap; color: #333; flex: none; }
.e-list { height: 277px; padding-top: 15px; box-sizing: border-box; color: #333; margin-left: -1px; flex: none; }
.e-row { height: 18px; line-height: 18px; white-space: nowrap; }
.e-hscroll { height: 14px; background: #e9e9e9; text-align: right; padding-right: 2px; line-height: 12px; font-size: 15px; flex: none; }
.e-grey { height: 27px; background: #f0f0f0; border-bottom: 1px solid #888; flex: none; }
.e-view { height: 107px; display: flex; justify-content: flex-end; flex: none; }
.e-vbar { width: 13px; display: flex; flex-direction: column; justify-content: space-between; background: #f0f0f0; text-align: center; line-height: 14px; color: #333; }
.e-status { height: 22px; background: #efefef; border-bottom: 1px solid #ddd; display: flex; align-items: center; padding-left: 8px; flex: none; }
.e-dot { width: 9px; height: 9px; border-radius: 50%; background: radial-gradient(circle at 40% 40%, #f38, #7b0f1f 70%); }

.low-nav {
  position: absolute;
  left: 258px;
  top: 680px;
  width: 141px;
  height: 70px;
  background: #fff;
  border-left: 1px solid #bbb;
  border-right: 15px solid #cdcbce;
  box-shadow: -3px 0 6px rgba(0,0,0,.12);
  color: #222;
}
.low-top { height: 22px; padding-left: 34px; display: flex; gap: 7px; line-height: 12px; white-space: nowrap; color: #555; }
.low-folder { width: 13px; height: 17px; display: block; margin-top: -5px; flex: none; }
.low-row { height: 24px; display: flex; align-items: center; gap: 5px; padding-left: 24px; white-space: nowrap; }
.low-ball { width: 14px; height: 14px; border-radius: 50%; background: #3f86d2; margin-left: 1px; }
.low-shade { position: absolute; left: 1056px; top: 718px; width: 174px; height: 17px; background: #fafafa; box-shadow: inset 4px 0 4px -2px rgba(0,0,0,.2); }

/* PSnip tool */
.psnip {
  position: absolute;
  left: 2px;
  top: 87px;
  width: 570px;
  height: 600px;
  box-sizing: border-box;
  border: 1px solid #000;
  padding: 1px;
  background: #fff;
  display: flex;
  flex-direction: column;
}
.ps-head { height: 33px; margin: 1px 1px 0; flex: none; display: flex; justify-content: flex-end; border: 1px solid #aaa; box-sizing: border-box; }
.ps-pin { width: 18px; height: 32px; margin-top: -1px; }
.ps-close { width: 27px; height: 27px; margin: 2px 1px 0 14px; }
.ps-icons { height: 94px; flex: none; display: flex; align-items: center; }
.i1 { width: 81px; height: 81px; margin-left: 6px; flex: none; }
.i2 { width: 80px; height: 80px; margin-left: 16px; margin-top: -5px; flex: none; }
.i3 { width: 84px; height: 66px; margin-left: 11px; flex: none; }
.i4 { width: 79px; height: 67px; margin-left: 13px; flex: none; }
.i5 { width: 67px; height: 14px; margin-left: 22px; background: #000; flex: none; }
.i6 { width: 86px; height: 86px; margin-left: 18px; flex: none; }
.ps-panel { flex: 1; border: 1px solid #999; padding: 20px 0 0 20px; min-height: 0; }
.snap { display: flex; }
.thumb { width: 57px; height: 66px; flex: none; }
.snap-side { margin-left: 14px; }
.snap-title { font-size: 21.6px; line-height: 30px; height: 38px; color: #333; font-weight: 300; white-space: nowrap; }
.snap-tools { display: flex; align-items: center; }
.m1 { width: 22px; height: 28px; margin-left: 5px; flex: none; }
.m2 { width: 28px; height: 28px; margin-left: 7px; flex: none; }
.m3 { width: 27px; height: 28px; margin-left: 5px; flex: none; }
.m4 { width: 28px; height: 29px; margin-left: 5px; flex: none; }
.m5 { width: 24px; height: 28px; margin-left: 5px; flex: none; }
.slider { width: 80px; height: 4px; margin-left: 4px; background: #dcdcdc; position: relative; flex: none; }
.sl-thumb { position: absolute; left: 73px; top: -8px; width: 10px; height: 19px; background: #0c78d6; }

.mark { position: absolute; left: 1094px; top: 673px; width: 136px; text-align: center; pointer-events: none; }
.mark-big { font-size: 44px; line-height: 52px; font-weight: 700; color: #fff; -webkit-text-stroke: 1px #d6d6d6; letter-spacing: 1px; white-space: nowrap; }
.mark-url { font-size: 12.500px; line-height: 12px; font-weight: 700; color: #fff; -webkit-text-stroke: .6px #cfcfcf; white-space: nowrap; letter-spacing: .4px; font-family: "Liberation Sans", sans-serif; }
</style>
